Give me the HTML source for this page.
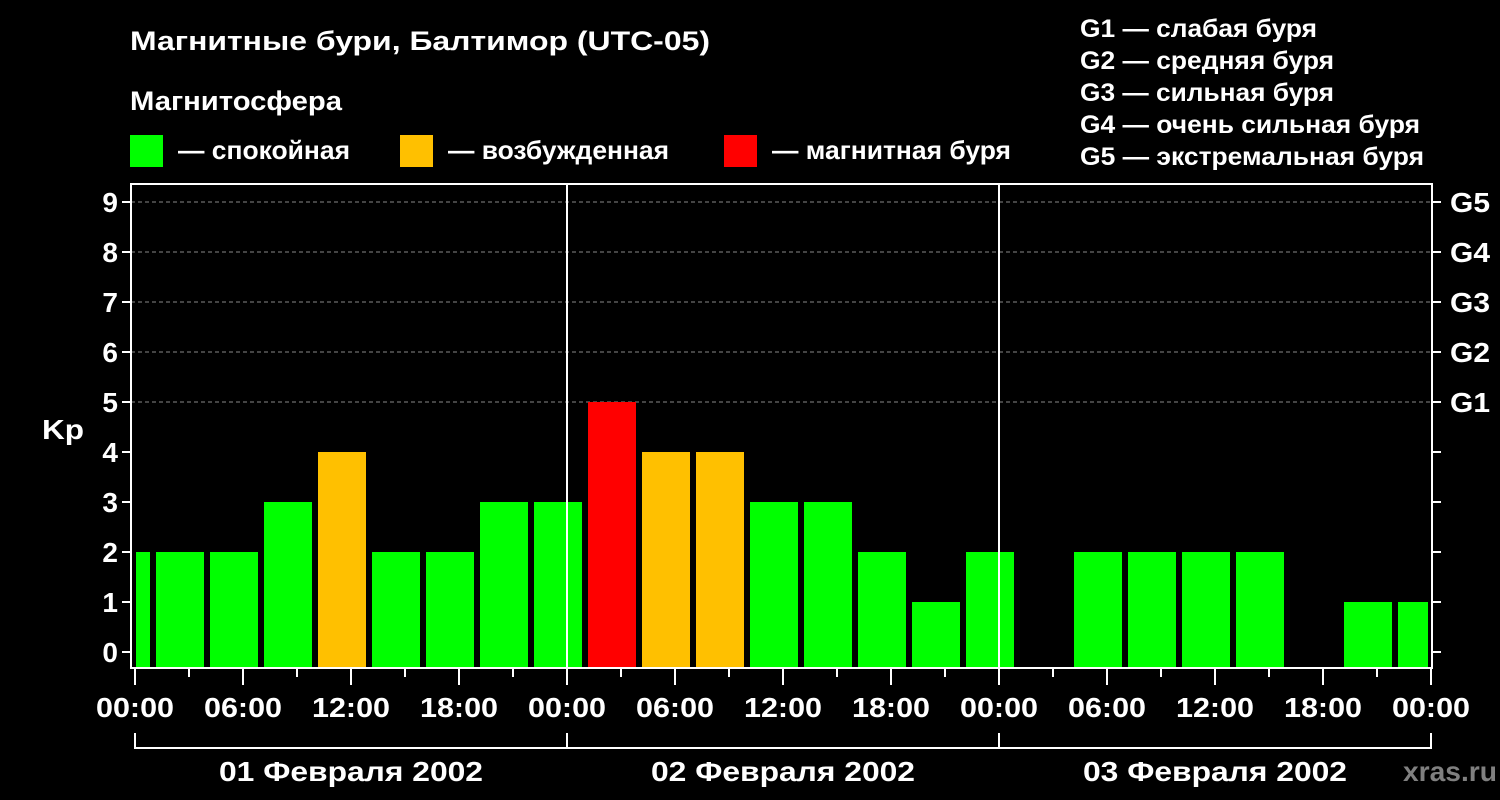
<!DOCTYPE html>
<html><head><meta charset="utf-8"><style>
html,body{margin:0;padding:0;background:#000;}
svg{display:block;}
text{font-family:"Liberation Sans",Arial,sans-serif;font-weight:bold;fill:#fff;}
</style></head><body>
<svg width="1500" height="800" viewBox="0 0 1500 800" xmlns="http://www.w3.org/2000/svg">
<rect width="1500" height="800" fill="#000"/>
<text x="130" y="50" font-size="27" textLength="580" lengthAdjust="spacingAndGlyphs">Магнитные бури, Балтимор (UTC-05)</text>
<text x="130" y="110" font-size="27" textLength="212" lengthAdjust="spacingAndGlyphs">Магнитосфера</text>
<rect x="130" y="135" width="33" height="32" fill="#00ff00"/>
<text x="178" y="159" font-size="26" textLength="172" lengthAdjust="spacingAndGlyphs">— спокойная</text>
<rect x="400" y="135" width="33" height="32" fill="#ffc000"/>
<text x="448" y="159" font-size="26" textLength="221" lengthAdjust="spacingAndGlyphs">— возбужденная</text>
<rect x="724" y="135" width="33" height="32" fill="#ff0000"/>
<text x="772" y="159" font-size="26" textLength="239" lengthAdjust="spacingAndGlyphs">— магнитная буря</text>
<g font-size="25">
<text x="1080" y="37" textLength="237" lengthAdjust="spacingAndGlyphs">G1 — слабая буря</text>
<text x="1080" y="69" textLength="254" lengthAdjust="spacingAndGlyphs">G2 — средняя буря</text>
<text x="1080" y="101" textLength="254" lengthAdjust="spacingAndGlyphs">G3 — сильная буря</text>
<text x="1080" y="133" textLength="340" lengthAdjust="spacingAndGlyphs">G4 — очень сильная буря</text>
<text x="1080" y="165" textLength="344" lengthAdjust="spacingAndGlyphs">G5 — экстремальная буря</text>
</g>
<g stroke="#888" stroke-dasharray="4,3" stroke-width="1">
<line x1="131" y1="202" x2="1432" y2="202"/>
<line x1="131" y1="252" x2="1432" y2="252"/>
<line x1="131" y1="302" x2="1432" y2="302"/>
<line x1="131" y1="352" x2="1432" y2="352"/>
<line x1="131" y1="402" x2="1432" y2="402"/>
</g>
<g fill="#00ff00">
<rect x="136" y="552" width="14" height="116"/>
<rect x="156" y="552" width="48" height="116"/>
<rect x="210" y="552" width="48" height="116"/>
<rect x="264" y="502" width="48" height="166"/>
<rect x="372" y="552" width="48" height="116"/>
<rect x="426" y="552" width="48" height="116"/>
<rect x="480" y="502" width="48" height="166"/>
<rect x="534" y="502" width="48" height="166"/>
<rect x="750" y="502" width="48" height="166"/>
<rect x="804" y="502" width="48" height="166"/>
<rect x="858" y="552" width="48" height="116"/>
<rect x="912" y="602" width="48" height="66"/>
<rect x="966" y="552" width="48" height="116"/>
<rect x="1074" y="552" width="48" height="116"/>
<rect x="1128" y="552" width="48" height="116"/>
<rect x="1182" y="552" width="48" height="116"/>
<rect x="1236" y="552" width="48" height="116"/>
<rect x="1344" y="602" width="48" height="66"/>
<rect x="1398" y="602" width="30" height="66"/>
</g>
<g fill="#ffc000">
<rect x="318" y="452" width="48" height="216"/>
<rect x="642" y="452" width="48" height="216"/>
<rect x="696" y="452" width="48" height="216"/>
</g>
<rect x="588" y="402" width="48" height="266" fill="#ff0000"/>
<g stroke="#fff" stroke-width="2" fill="none">
<rect x="131" y="184" width="1301" height="484"/>
<line x1="567" y1="184" x2="567" y2="668"/>
<line x1="999" y1="184" x2="999" y2="668"/>
<path d="M122 202H131M122 252H131M122 302H131M122 352H131M122 402H131M122 452H131M122 502H131M122 552H131M122 602H131M122 652H131"/>
<path d="M1432 202H1441M1432 252H1441M1432 302H1441M1432 352H1441M1432 402H1441M1432 452H1441M1432 502H1441M1432 552H1441M1432 602H1441M1432 652H1441"/>
<path d="M135 668V685M243 668V685M351 668V685M459 668V685M567 668V685M675 668V685M783 668V685M891 668V685M999 668V685M1107 668V685M1215 668V685M1323 668V685M1431 668V685"/>
<path d="M189 668V677M297 668V677M405 668V677M513 668V677M621 668V677M729 668V677M837 668V677M945 668V677M1053 668V677M1161 668V677M1269 668V677M1377 668V677"/>
<path d="M135 733V748H1431V733M567 733V748M999 733V748"/>
</g>
<g font-size="28" text-anchor="end">
<text x="118" y="212">9</text><text x="118" y="262">8</text><text x="118" y="312">7</text>
<text x="118" y="362">6</text><text x="118" y="412">5</text><text x="118" y="462">4</text>
<text x="118" y="512">3</text><text x="118" y="562">2</text><text x="118" y="612">1</text>
<text x="118" y="662">0</text>
</g>
<text x="42" y="439" font-size="28" textLength="42" lengthAdjust="spacingAndGlyphs">Kp</text>
<g font-size="28">
<text x="1450" y="212" textLength="40" lengthAdjust="spacingAndGlyphs">G5</text>
<text x="1450" y="262" textLength="40" lengthAdjust="spacingAndGlyphs">G4</text>
<text x="1450" y="312" textLength="40" lengthAdjust="spacingAndGlyphs">G3</text>
<text x="1450" y="362" textLength="40" lengthAdjust="spacingAndGlyphs">G2</text>
<text x="1450" y="412" textLength="40" lengthAdjust="spacingAndGlyphs">G1</text>
</g>
<g font-size="28" text-anchor="middle">
<text x="135" y="717" textLength="78" lengthAdjust="spacingAndGlyphs">00:00</text>
<text x="243" y="717" textLength="78" lengthAdjust="spacingAndGlyphs">06:00</text>
<text x="351" y="717" textLength="78" lengthAdjust="spacingAndGlyphs">12:00</text>
<text x="459" y="717" textLength="78" lengthAdjust="spacingAndGlyphs">18:00</text>
<text x="567" y="717" textLength="78" lengthAdjust="spacingAndGlyphs">00:00</text>
<text x="675" y="717" textLength="78" lengthAdjust="spacingAndGlyphs">06:00</text>
<text x="783" y="717" textLength="78" lengthAdjust="spacingAndGlyphs">12:00</text>
<text x="891" y="717" textLength="78" lengthAdjust="spacingAndGlyphs">18:00</text>
<text x="999" y="717" textLength="78" lengthAdjust="spacingAndGlyphs">00:00</text>
<text x="1107" y="717" textLength="78" lengthAdjust="spacingAndGlyphs">06:00</text>
<text x="1215" y="717" textLength="78" lengthAdjust="spacingAndGlyphs">12:00</text>
<text x="1323" y="717" textLength="78" lengthAdjust="spacingAndGlyphs">18:00</text>
<text x="1431" y="717" textLength="78" lengthAdjust="spacingAndGlyphs">00:00</text>
<text x="351" y="781" textLength="264" lengthAdjust="spacingAndGlyphs">01 Февраля 2002</text>
<text x="783" y="781" textLength="264" lengthAdjust="spacingAndGlyphs">02 Февраля 2002</text>
<text x="1215" y="781" textLength="264" lengthAdjust="spacingAndGlyphs">03 Февраля 2002</text>
</g>
<text x="1403" y="781" font-size="28" textLength="94" lengthAdjust="spacingAndGlyphs" style="fill:#808080">xras.ru</text>
</svg>
</body></html>
